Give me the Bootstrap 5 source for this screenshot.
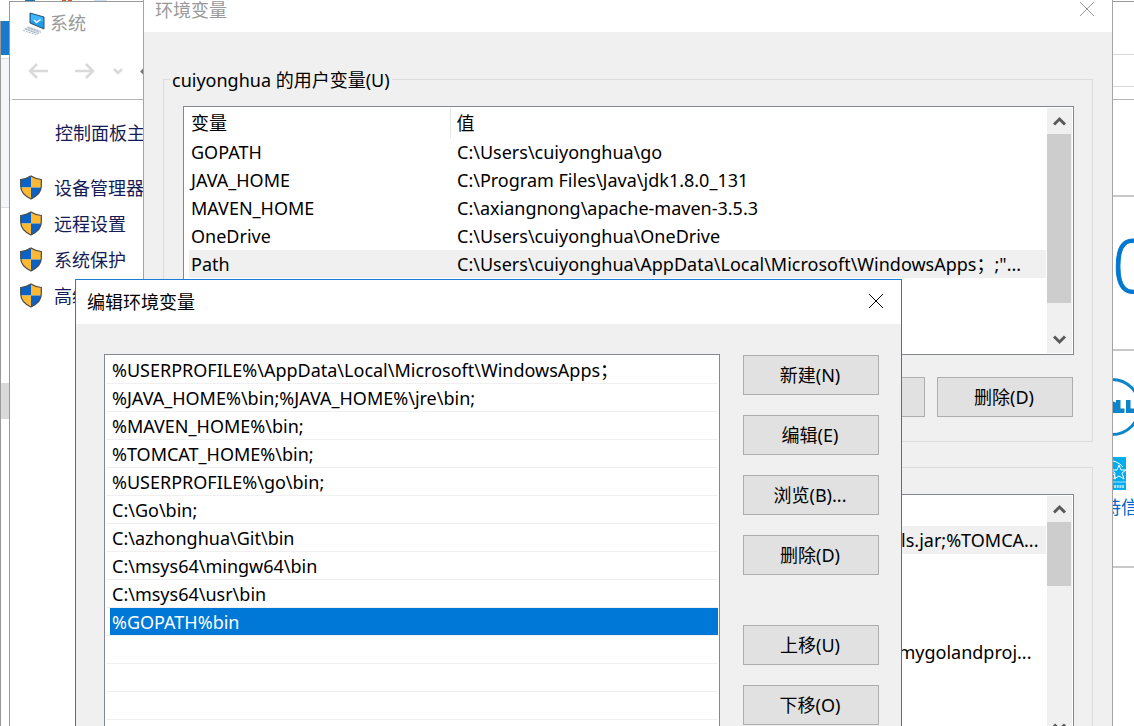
<!DOCTYPE html>
<html lang="zh-CN">
<head>
<meta charset="utf-8">
<meta name="viewport" content="width=device-width, initial-scale=1">
<title>环境变量</title>
<link href="https://cdn.jsdelivr.net/npm/bootstrap@5.3.0/dist/css/bootstrap.min.css" rel="stylesheet">
<style>
  body { font: 18px/28px "Noto Sans", "Noto Sans CJK SC", sans-serif; color: #000; background: #fff; }
  .zh { font-family: "Noto Sans CJK SC", "Noto Sans", sans-serif; font-weight: 400; }

  /* strip of the page behind the windows */
  .behind { width: 10px; border-left: 1px solid #9a9a9a; }
  .behind-tab { height: 34px; margin-top: 21px; background: #1979ca; }
  .behind-pane { height: 150px; margin-top: 3px; background: #f4f5f8; border-top: 1px solid #ddd; border-bottom: 1px solid #ddd; }
  .behind-thumb { height: 36px; margin-top: 175px; background: #d9d9d9; }

  /* windows */
  .win-system { left: 9px; right: 0; top: 1px; bottom: 0; background: #fff; border: 1px solid #999; border-width: 1px 0 0 1px; }
  .win-env { left: 143px; right: 21px; top: -13px; background: #f0f0f0; border: 1px solid #a5a5a5; }
  .win-edit { left: 75px; right: 232px; top: 279px; background: #f0f0f0; border: 1px solid #1a7fd4; }
  .titlebar { height: 44px; background: #fff; padding: 0 17px 2px 11px; }
  .titlebar button { line-height: 0; }
  .dim { color: #999; }

  /* system window */
  .sys-title { height: 52px; padding: 6px 12px; }
  .sys-nav { height: 33px; padding-left: 17px; }
  .sys-address { border: 1px solid #d9d9d9; margin-left: 16px; }
  .sys-body { border-top: 1px solid #b5b5b5; margin: 12px 0 0 2px; }
  .sys-side { padding: 18px 0 0 8px; }
  .sys-side a { color: #151c55; }
  .sys-side li { height: 36px; }
  .sys-head { padding-left: 35px; margin-bottom: 27px; }
  .sys-main { width: 60px; padding-top: 95px; }
  .sys-rule { height: 2px; background: #c8c8c8; }
  .sys-ten { font: 400 74px/136px "Open Sans", "Noto Sans", sans-serif; font-weight: 300; color: #0078d0; padding: 0 0 16px 38px; -webkit-text-stroke: 1px #0078d0; }
  .sys-help { color: #0066cc; margin: 1px 0 46px 11px; }

  /* group boxes and lists */
  .env-body { padding: 35px 19px 20px; }
  .group { border: 1px solid #dcdcdc; padding: 0 18px 24px 6px; margin-bottom: 13px; }
  .group legend { font-size: 18px; line-height: 24px; height: 24px; padding: 0 2px; margin-bottom: 15px; }
  .group-in { margin-left: 13px; }
  .listbox { background: #fff; border: 1px solid #828790; }
  .group .listbox { height: 249px; padding: 1px; }
  .vars { table-layout: fixed; width: 100%; margin-left: 4px; border-collapse: collapse; }
  .vars th { height: 30px; font-weight: 400; line-height: 28px; padding: 0 0 2px 2px; border-right: 1px solid #e5e5e5; }
  .vars td { height: 28px; line-height: 28px; padding: 0 0 0 2px; white-space: nowrap; }
  .vars th + th { padding-left: 6px; }
  .vars td + td { padding-left: 7px; }
  .vars .on { background: #f0f0f0; }
  .vars .c-name { width: 261px; }
  .vars .cut-a { padding-right: 11px; }
  .vars .cut-b { padding-right: 18px; }
  .bar-v { width: 25px; background: #f0f0f0; margin-left: 1px; }
  .bar-v button { height: 26px; line-height: 0; }
  .thumb { background: #cdcdcd; width: 24px; }
  .thumb-a { height: 169px; }
  .thumb-b { height: 64px; }
  .push { width: 136px; height: 40px; border: 1px solid #adadad; border-radius: 0; background: #e1e1e1; color: #000; font-size: 18px; line-height: 28px; padding: 0 2px 2px 0; }
  .gap-btn { gap: 12px; margin: 22px 1px 0 0; }

  /* edit dialog */
  .edit-body { padding: 30px 22px 24px 28px; gap: 23px; }
  .paths { padding: 1px; }
  .paths li { height: 28px; border-bottom: 1px solid #f0f0f0; }
  .paths span { display: block; margin-left: 4px; padding-left: 2px; height: 27px; line-height: 28px; white-space: nowrap; }
  .paths .on { background: #0078d7; color: #fff; }
  .edit-btns { gap: 20px; padding-top: 1px; }
  .apart { margin-top: 30px; }
</style>
</head>
<body>
<div class="position-relative vh-100 overflow-hidden">

  <div class="behind h-100">
    <div class="behind-tab"></div>
    <div class="behind-pane"></div>
    <div class="behind-thumb"></div>
  </div>
  <svg class="position-absolute top-0 start-0" width="144" height="2"><path d="M25 0h10v2H25z" fill="#1c6fb0"/><path d="M62 0h4v2h-4zM68 0h4v2h-4z" fill="#e2561f"/><path d="M94 0h13v2H94z" fill="#cfe0f3"/></svg>

  <svg class="position-absolute" width="0" height="0" aria-hidden="true">
    <defs>
      <g id="shield">
        <g clip-path="url(#shieldclip)"><path d="M0 0h11v12.500H0z" fill="#0a63c4"/><path d="M11 0h11v12.500H11z" fill="#fdb934"/><path d="M0 12.500h11V25H0z" fill="#fdb934"/><path d="M11 12.500h11V25H11z" fill="#0a63c4"/></g>
        <path d="M11 1C14 3 18 4 21.300 4.500V11c0 6-4 10-10.300 13C4.700 21 .7 17 .7 11V4.500C4 4 8 3 11 1z" fill="none" stroke="#4a4a4a" stroke-width="1.200"/>
      </g>
      <clipPath id="shieldclip"><path d="M11 1C14 3 18 4 21.300 4.500V11c0 6-4 10-10.300 13C4.700 21 .7 17 .7 11V4.500C4 4 8 3 11 1z"/></clipPath>
      <path id="chev-up" d="M1 8.500l5.500-5.500 5.500 5.500" fill="none" stroke="#5a5a5a" stroke-width="3"/>
      <path id="chev-down" d="M1 1.500l5.500 5.500 5.500-5.500" fill="none" stroke="#5a5a5a" stroke-width="3"/>
      <path id="cross" d="M1 1l14 14M15 1L1 15" fill="none" stroke="currentColor"/>
    </defs>
  </svg>

  <!-- System window -->
  <section class="win-system position-absolute d-flex flex-column" aria-label="系统">
    <header class="sys-title d-flex align-items-start">
      <svg class="flex-shrink-0" width="24" height="28" viewBox="0 0 24 28">
        <path d="M8 5l14 4v12L8 15z" fill="#1e9be9" stroke="#31536c"/>
        <path d="M9 6l12 3.500v4L9 13z" fill="#3db4ff"/>
        <path d="M12 12l2.500 2.500 4-3" fill="none" stroke="#fff" stroke-width="1.500"/>
        <path d="M1 21l6-2.500 13 4.500-5 3z" fill="#d3dbe2"/>
        <path d="M3 21l11 4M6 19.500l11 4M1 22.500l13 4 5-2" fill="none" stroke="#8d99a3" stroke-width=".7" stroke-dasharray="2 1"/>
      </svg>
      <span class="zh dim ms-1">系统</span>
    </header>
    <nav class="sys-nav d-flex align-items-center" aria-label="导航">
      <svg class="flex-shrink-0" width="118" height="20" viewBox="0 0 118 20" fill="none" stroke="#d9d9d9" stroke-width="2.500">
        <path d="M21 10H3M10 3l-7 7 7 7M48 10h18M59 3l7 7-7 7"/><path d="M87 8l4 4 4-4"/><path d="M118 7l-3.500 3.500 3.500 3.500" stroke="#777" stroke-width="2"/>
      </svg>
      <div class="sys-address border-end-0 flex-fill align-self-stretch"></div>
    </nav>
    <div class="sys-body d-flex justify-content-between flex-fill">
      <div class="sys-side zh">
        <a href="#" class="sys-head d-block text-decoration-none">控制面板主页</a>
        <ul class="list-unstyled m-0">
          <li><a href="#" class="d-flex align-items-center text-decoration-none"><svg width="22" height="25"><use href="#shield"/></svg><span class="ps-1 ms-2">设备管理器</span></a></li>
          <li><a href="#" class="d-flex align-items-center text-decoration-none"><svg width="22" height="25"><use href="#shield"/></svg><span class="ps-1 ms-2">远程设置</span></a></li>
          <li><a href="#" class="d-flex align-items-center text-decoration-none"><svg width="22" height="25"><use href="#shield"/></svg><span class="ps-1 ms-2">系统保护</span></a></li>
          <li><a href="#" class="d-flex align-items-center text-decoration-none"><svg width="22" height="25"><use href="#shield"/></svg><span class="ps-1 ms-2">高级系统设置</span></a></li>
        </ul>
      </div>
      <div class="sys-main overflow-hidden">
        <div class="sys-rule"></div>
        <div class="sys-ten">0</div>
        <div class="sys-rule"></div>
        <svg class="d-block" width="60" height="140" viewBox="0 0 60 140">
          <circle cx="38" cy="56" r="27.500" fill="#fff" stroke="#0b85c8" stroke-width="3"/>
          <path d="M38 50l5 2v10h-5zM42 49h4.500v8.500h4v4.500H42zM52 49h4.500v8.500H60v4.500h-8z" fill="#0b85c8"/>
          <path d="M20 106h32v33H20z" fill="#00adef"/>
          <path d="M20 131h32" stroke="#a8e2fa"/>
          <path d="M45 114l2 5h5l-4 3 2 6-5-3-5 3 1-6-4-3h6z" fill="none" stroke="#fff"/>
          <path d="M32 109q11 0 17 7M37 125q2-4 4 0v3" fill="none" stroke="#fff"/>
          <path d="M40 135.500h10" stroke="#a8e2fa" stroke-width="3" stroke-dasharray="2 .7"/>
        </svg>
        <a href="#" class="sys-help zh d-block text-nowrap text-decoration-none">支持信息</a>
        <div class="sys-rule"></div>
      </div>
    </div>
  </section>

  <!-- Environment variables -->
  <section class="win-env position-absolute" aria-label="环境变量">
    <header class="titlebar d-flex align-items-center justify-content-between dim">
      <span class="zh">环境变量</span>
      <button class="border-0 bg-transparent p-0 dim" aria-label="关闭"><svg width="16" height="16"><use href="#cross"/></svg></button>
    </header>
    <div class="env-body">
      <fieldset class="group">
        <legend class="float-none w-auto">cuiyonghua <span class="zh">的用户变量</span>(U)</legend>
        <div class="group-in">
          <div class="listbox d-flex">
            <div class="flex-fill overflow-hidden">
              <table class="vars">
                <colgroup><col class="c-name"><col></colgroup>
                <thead><tr><th class="zh">变量</th><th class="zh">值</th></tr></thead>
                <tbody>
                  <tr><td>GOPATH</td><td>C:\Users\cuiyonghua\go</td></tr>
                  <tr><td>JAVA_HOME</td><td>C:\Program Files\Java\jdk1.8.0_131</td></tr>
                  <tr><td>MAVEN_HOME</td><td>C:\axiangnong\apache-maven-3.5.3</td></tr>
                  <tr><td>OneDrive</td><td>C:\Users\cuiyonghua\OneDrive</td></tr>
                  <tr class="on"><td>Path</td><td>C:\Users\cuiyonghua\AppData\Local\Microsoft\WindowsApps；;"...</td></tr>
                </tbody>
              </table>
            </div>
            <div class="bar-v flex-shrink-0 d-flex flex-column">
              <button class="border-0 bg-transparent p-0" aria-label="向上"><svg width="14" height="10"><use href="#chev-up"/></svg></button>
              <div class="thumb thumb-a"></div>
              <button class="border-0 bg-transparent p-0 mt-auto" aria-label="向下"><svg width="14" height="10"><use href="#chev-down"/></svg></button>
            </div>
          </div>
          <div class="gap-btn d-flex justify-content-end">
            <button class="push btn" aria-label="编辑"></button>
            <button class="push btn"><span class="zh">删除</span>(D)</button>
          </div>
        </div>
      </fieldset>

      <fieldset class="group" aria-label="系统变量">
        <legend class="float-none w-auto"></legend>
        <div class="group-in">
          <div class="listbox d-flex">
            <div class="flex-fill overflow-hidden">
              <table class="vars">
                <colgroup><col class="c-name"><col></colgroup>
                <thead><tr><th></th><th></th></tr></thead>
                <tbody>
                  <tr class="on"><td></td><td class="text-end cut-a">ls.jar;%TOMCA...</td></tr>
                  <tr><td></td><td></td></tr>
                  <tr><td></td><td></td></tr>
                  <tr><td></td><td></td></tr>
                  <tr><td></td><td class="text-end cut-b">mygolandproj...</td></tr>
                </tbody>
              </table>
            </div>
            <div class="bar-v flex-shrink-0 d-flex flex-column">
              <button class="border-0 bg-transparent p-0" aria-label="向上"><svg width="14" height="10"><use href="#chev-up"/></svg></button>
              <div class="thumb thumb-b"></div>
              <button class="border-0 bg-transparent p-0 mt-auto" aria-label="向下"><svg width="14" height="10"><use href="#chev-down"/></svg></button>
            </div>
          </div>
        </div>
      </fieldset>
    </div>
  </section>

  <!-- Edit environment variable -->
  <section class="win-edit position-absolute" aria-label="编辑环境变量">
    <header class="titlebar d-flex align-items-center justify-content-between">
      <span class="zh">编辑环境变量</span>
      <button class="border-0 bg-transparent p-0" aria-label="关闭"><svg width="16" height="16"><use href="#cross"/></svg></button>
    </header>
    <div class="edit-body d-flex">
      <ul class="listbox paths list-unstyled m-0 flex-fill overflow-hidden">
        <li><span>%USERPROFILE%\AppData\Local\Microsoft\WindowsApps；</span></li>
        <li><span>%JAVA_HOME%\bin;%JAVA_HOME%\jre\bin;</span></li>
        <li><span>%MAVEN_HOME%\bin;</span></li>
        <li><span>%TOMCAT_HOME%\bin;</span></li>
        <li><span>%USERPROFILE%\go\bin;</span></li>
        <li><span>C:\Go\bin;</span></li>
        <li><span>C:\azhonghua\Git\bin</span></li>
        <li><span>C:\msys64\mingw64\bin</span></li>
        <li><span>C:\msys64\usr\bin</span></li>
        <li><span class="on">%GOPATH%bin</span></li>
        <li></li><li></li><li></li><li></li><li></li>
      </ul>
      <div class="edit-btns d-flex flex-column flex-shrink-0">
        <button class="push btn"><span class="zh">新建</span>(N)</button>
        <button class="push btn"><span class="zh">编辑</span>(E)</button>
        <button class="push btn"><span class="zh">浏览</span>(B)...</button>
        <button class="push btn"><span class="zh">删除</span>(D)</button>
        <button class="push btn apart"><span class="zh">上移</span>(U)</button>
        <button class="push btn"><span class="zh">下移</span>(O)</button>
      </div>
    </div>
  </section>
</div>
<script src="https://cdn.jsdelivr.net/npm/bootstrap@5.3.0/dist/js/bootstrap.bundle.min.js"></script>
</body>
</html>
